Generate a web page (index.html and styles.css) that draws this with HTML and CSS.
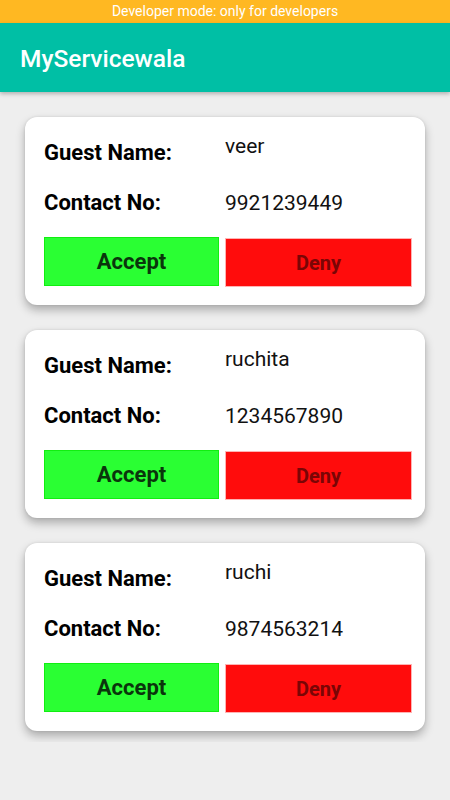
FILE: index.html
```html
<!DOCTYPE html>
<html>
<head>
<meta charset="utf-8">
<link rel="stylesheet" href="styles.css">
</head>
<body>
<div class="status">Developer mode: only for developers</div>
<header class="appbar"><span class="title">MyServicewala</span></header>
<main class="list">
  <section class="card">
    <div class="row row-name"><span class="label">Guest Name:</span><span class="value">veer</span></div>
    <div class="row row-contact"><span class="label">Contact No:</span><span class="value">9921239449</span></div>
    <div class="actions"><button class="btn accept">Accept</button><button class="btn deny">Deny</button></div>
  </section>
  <section class="card">
    <div class="row row-name"><span class="label">Guest Name:</span><span class="value">ruchita</span></div>
    <div class="row row-contact"><span class="label">Contact No:</span><span class="value">1234567890</span></div>
    <div class="actions"><button class="btn accept">Accept</button><button class="btn deny">Deny</button></div>
  </section>
  <section class="card">
    <div class="row row-name"><span class="label">Guest Name:</span><span class="value">ruchi</span></div>
    <div class="row row-contact"><span class="label">Contact No:</span><span class="value">9874563214</span></div>
    <div class="actions"><button class="btn accept">Accept</button><button class="btn deny">Deny</button></div>
  </section>
</main>
</body>
</html>
```
FILE: styles.css
```css
* { box-sizing: border-box; }
html, body { margin: 0; padding: 0; }
body {
  width: 450px;
  height: 800px;
  background: #eeeeee;
  font-family: Roboto, "Noto Sans", sans-serif;
  overflow: hidden;
}
.status {
  height: 23px;
  background: #ffb822;
  color: #ffffff;
  font-size: 14px;
  line-height: 23px;
  text-align: center;
}
.appbar {
  height: 69px;
  background: #00bfa5;
  display: flex;
  align-items: center;
  padding-left: 20px;
  box-shadow: 0 2px 4px rgba(0,0,0,0.25);
  position: relative;
  z-index: 2;
}
.title {
  color: #ffffff;
  font-size: 24.5px;
  font-weight: 500;
  line-height: 30px;
  margin-top: 2px;
}
.list {
  overflow: hidden;
  padding: 25px 25px 11px 25px;
  display: flex;
  flex-direction: column;
  gap: 25px;
}
.card {
  background: #ffffff;
  border-radius: 12px;
  padding: 17px 13px 18px 19px;
  box-shadow: 0 5px 10px rgba(0,0,0,0.28), 0 0 3px rgba(0,0,0,0.10);
  height: 188px;
}
.row {
  display: grid;
  grid-template-columns: 181px 1fr;
  align-items: start;
  color: #000000;
}
.label {
  font-weight: 700;
  font-size: 22px;
  line-height: 26px;
}
.value {
  font-weight: 400;
  font-size: 21px;
  line-height: 25px;
  color: #111111;
}
.row-name .label { margin-top: 6px; }
.row-contact { margin-top: 24px; }
.row-contact .value { margin-top: 1px; }
.actions {
  display: flex;
  margin-top: 21px;
  gap: 6px;
  align-items: flex-start;
}
.btn {
  font-family: Roboto, "Noto Sans", sans-serif;
  font-weight: 700;
  border-radius: 0;
  padding: 0;
  height: 49px;
  cursor: pointer;
}
.accept {
  width: 175px;
  background: #2aff33;
  border: 1px solid #11ee11;
  color: #0a350c;
  font-size: 22px;
}
.deny {
  width: 187px;
  margin-top: 1px;
  background: #ff0c0c;
  border: 1px solid #ffb3b3;
  color: #7a0505;
  font-size: 20px;
}
```
